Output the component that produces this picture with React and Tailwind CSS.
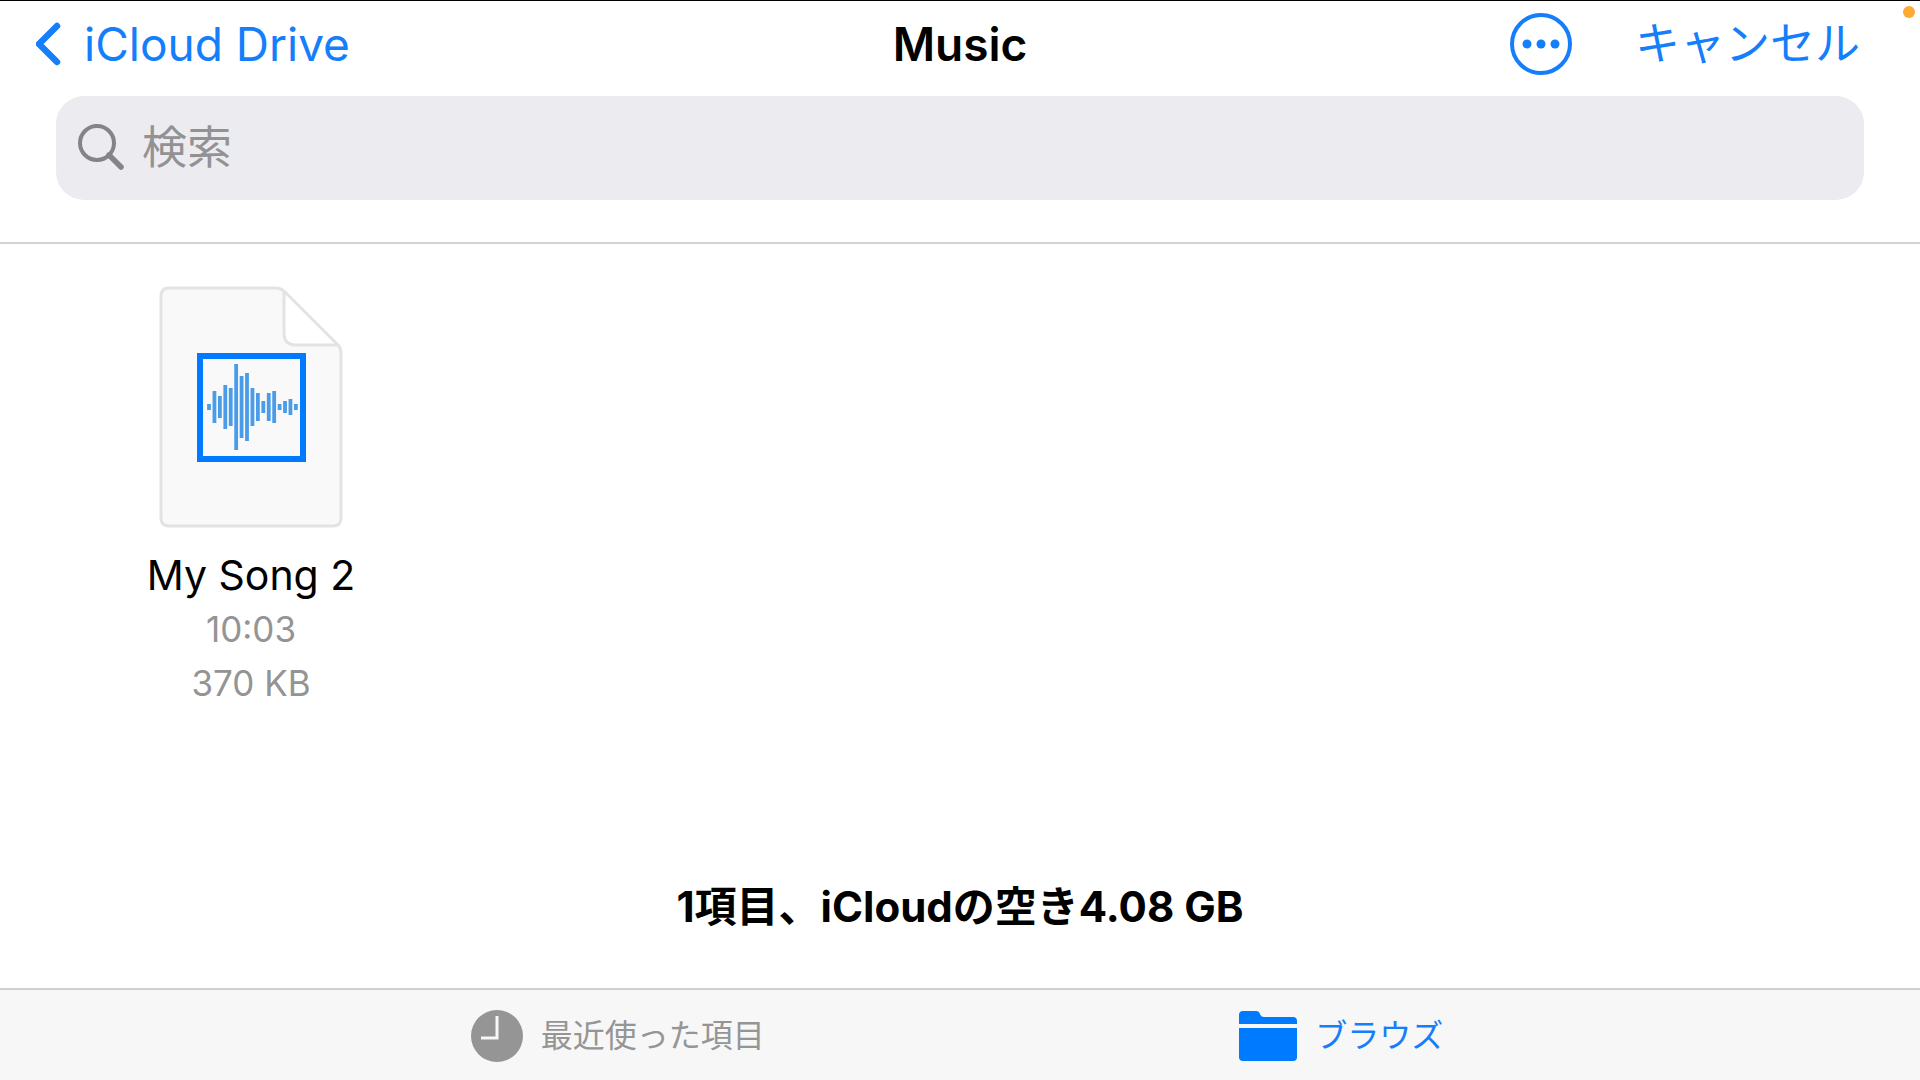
import { useState } from 'react';

const files = [
  { id: 1, name: 'My Song 2', time: '10:03', size: '370 KB' },
];

// half height of each bar in the audio file icon
const waveform = [3, 16, 11, 22, 19, 43, 31, 34, 19, 14, 6, 14, 16, 3, 6, 8, 3];

const ChevronIcon = () => (
  <svg viewBox="0 0 26 44" className="w-[26px] h-[44px]" fill="none" aria-hidden="true">
    <path d="M21 4 3 22l18 18" stroke="currentColor" strokeWidth="6.5" strokeLinecap="round" strokeLinejoin="round" />
  </svg>
);

const MoreIcon = () => (
  <svg viewBox="0 0 64 64" className="w-16 h-16" aria-hidden="true">
    <circle cx="32" cy="32" r="29" fill="none" stroke="currentColor" strokeWidth="4" />
    <circle cx="18" cy="32" r="4.5" fill="currentColor" />
    <circle cx="32" cy="32" r="4.5" fill="currentColor" />
    <circle cx="46" cy="32" r="4.5" fill="currentColor" />
  </svg>
);

const SearchIcon = () => (
  <svg viewBox="0 0 48 48" className="w-12 h-12 flex-shrink-0" fill="none" aria-hidden="true">
    <circle cx="19" cy="19" r="17" stroke="currentColor" strokeWidth="4" />
    <path d="M31 31l12 12" stroke="currentColor" strokeWidth="5.5" strokeLinecap="round" />
  </svg>
);

const AudioFileIcon = () => (
  <svg viewBox="0 0 184 242" className="w-[184px] h-[242px]" fill="none" aria-hidden="true">
    <path
      d="M10 2h106q6 0 10 4l51 51q5 4 5 10v165q0 8-8 8H10q-8 0-8-8V10q0-8 8-8z"
      fill="#f9f9f9"
    />
    <path d="M125 5v42q0 12 12 12h42z" fill="#fff" />
    <path
      d="M10 2h106q6 0 10 4l51 51q5 4 5 10v165q0 8-8 8H10q-8 0-8-8V10q0-8 8-8zM125 5v42q0 12 12 12h41"
      stroke="#e3e3e3"
      strokeWidth="3"
    />
    <rect x="41" y="70" width="103" height="103" stroke="#007aff" strokeWidth="6" />
    {waveform.map((h, i) => (
      <path key={i} d={`M${50 + i * 5.43} ${121 - h}v${h * 2}`} stroke="#4a9be8" strokeWidth="3.8" />
    ))}
  </svg>
);

const ClockIcon = () => (
  <svg viewBox="0 0 52 52" className="w-[52px] h-[52px]" aria-hidden="true">
    <circle cx="26" cy="26" r="26" fill="currentColor" />
    <path d="M26 6v22H10" fill="none" stroke="#f7f7f7" strokeWidth="3" />
  </svg>
);

const FolderIcon = () => (
  <svg viewBox="0 0 58 50" className="w-[58px] h-[50px]" fill="#007aff" aria-hidden="true">
    <path d="M0 13V4q0-4 4-4h13q3 0 4 3 1 3 4 3h29q4 0 4 4v3z" />
    <path d="M0 17h58v29q0 4-4 4H4q-4 0-4-4z" />
  </svg>
);

const App = () => {
  const [query, setQuery] = useState('');
  const [tab, setTab] = useState('browse');

  return (
    <div className="relative min-h-screen flex flex-col bg-white text-black font-['Inter','Noto_Sans_CJK_JP',sans-serif]">
      {/* Microphone indicator */}
      <span className="absolute top-1.5 right-[5px] w-3 h-3 rounded-full bg-[#fcaa35]"></span>

      <header className="border-t border-t-black border-b-2 border-b-[#d2d2d4] pb-[42px]">
        <div className="h-[86px] grid grid-cols-[1fr_auto_1fr] items-center px-9 text-[#157efb]">
          <a href="#icloud" className="flex items-center gap-[22px] text-[46px] leading-[60px] whitespace-nowrap">
            <ChevronIcon />
            <span>iCloud Drive</span>
          </a>
          <h1 className="text-[46px] leading-[60px] font-semibold text-black">Music</h1>
          <div className="pr-6 flex items-center justify-end gap-[62px]">
            <button type="button" aria-label="その他">
              <MoreIcon />
            </button>
            <button type="button" className="text-[45px] leading-[60px] whitespace-nowrap">キャンセル</button>
          </div>
        </div>

        <label className="mt-[9px] mx-14 h-[104px] pl-[22px] pr-5 flex items-center gap-4 rounded-[28px] bg-[#ececf0] text-[#848487]">
          <SearchIcon />
          <input
            type="text"
            aria-label="検索"
            placeholder="検索"
            value={query}
            onChange={(e) => setQuery(e.target.value)}
            className="flex-1 min-w-0 bg-transparent outline-none text-[45px] leading-[60px] placeholder:text-[#929295]"
          />
        </label>
      </header>

      <main className="flex-1 flex flex-col justify-between pt-[42px] pb-[51px]">
        <ul className="flex flex-wrap px-[123px]">
          {files.map((file) => (
            <li key={file.id} className="w-64 flex flex-col items-center">
              <AudioFileIcon />
              <span className="mt-5 text-[41px] leading-[54px]">{file.name}</span>
              <span className="text-[35px] leading-[54px] text-[#949494]">{file.time}</span>
              <span className="text-[35px] leading-[54px] text-[#949494]">{file.size}</span>
            </li>
          ))}
        </ul>
        <p className="text-center text-[42px] leading-[60px] font-bold">1項目、iCloudの空き4.08 GB</p>
      </main>

      <nav className="h-[92px] pt-0.5 pr-1.5 flex items-center justify-center gap-[24.8%] border-t-2 border-[#d0d0d0] bg-[#f7f7f7] text-[32px] leading-[44px]">
        <button
          type="button"
          onClick={() => setTab('recent')}
          className={`flex items-center gap-[18px] ${tab === 'recent' ? 'text-[#157efb]' : 'text-[#959595]'}`}
        >
          <ClockIcon />
          <span>最近使った項目</span>
        </button>
        <button
          type="button"
          onClick={() => setTab('browse')}
          className={`flex items-center gap-[18px] ${tab === 'browse' ? 'text-[#157efb]' : 'text-[#959595]'}`}
        >
          <FolderIcon />
          <span>ブラウズ</span>
        </button>
      </nav>
    </div>
  );
};

export default App;
